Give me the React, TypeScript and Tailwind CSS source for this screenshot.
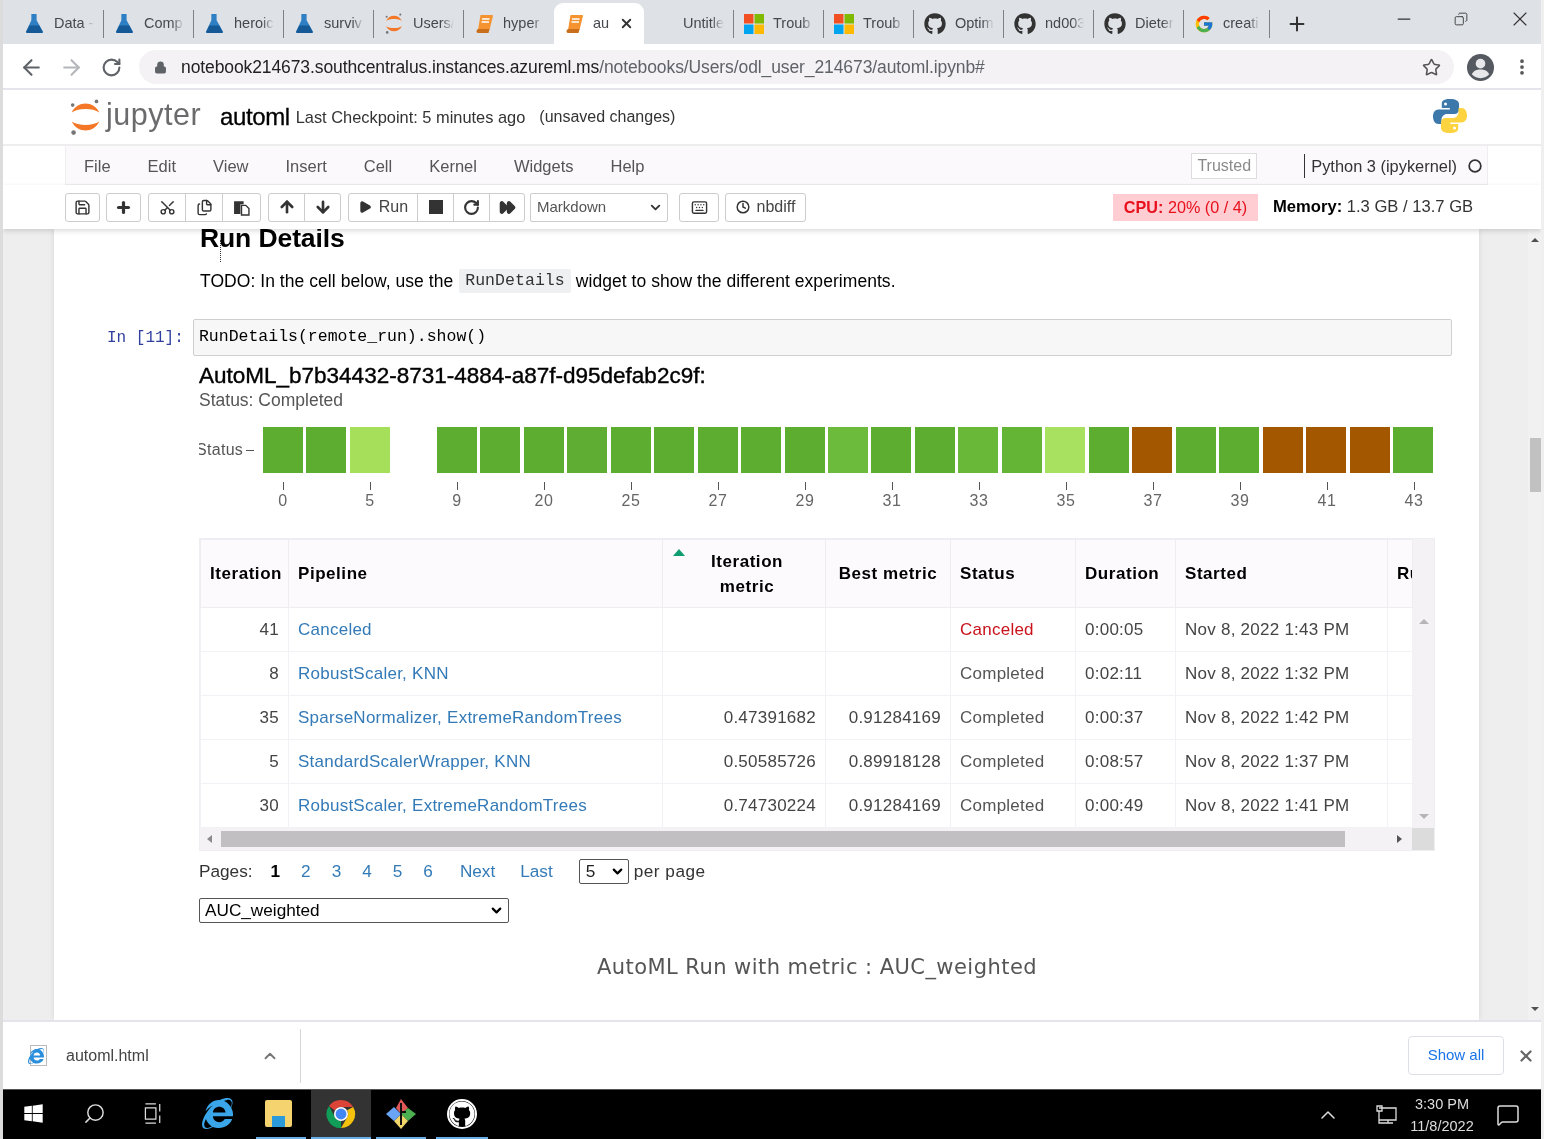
import {
  ArrowDown,
  ArrowLeft,
  ArrowRight,
  ChevronDown,
  ChevronUp,
  Circle,
  Clock,
  Copy,
  FastForward,
  Files,
  Keyboard,
  MessageSquare,
  MoreVertical,
  Play,
  Plus,
  RotateCw,
  Save,
  Scissors,
  Search,
  Star,
  X,
  ArrowUp,
  Lock,
  Minus,
} from "lucide-react";
import { FaGithub, FaInternetExplorer, FaWindows } from "react-icons/fa";
import { FcGoogle } from "react-icons/fc";

const sans = "font-['Liberation_Sans',Arial,sans-serif]";
const mono = "font-['Liberation_Mono',monospace]";

function Flask() {
  return (
    <svg viewBox="0 0 20 20" className="h-[21px] w-[21px] shrink-0">
      <path d="M7 1h5v6l6 10.500c.4.9-.2 1.500-1 1.500H3c-.9 0-1.400-.7-1-1.500L7 7z" fill="#2f7fc4" />
      <path d="M5 12h9.500l3.300 6-.8 1H3l-1-1z" fill="#155a96" />
    </svg>
  );
}

function JupyterArcs({ className }: { className: string }) {
  return (
    <svg viewBox="0 0 36 40" className={className}>
      <path d="M3 15C9 2 27 2 33 15C26 10 10 10 3 15Z" fill="#f37726" />
      <path d="M3 25C9 38 27 38 33 25C26 30 10 30 3 25Z" fill="#f37726" />
      <circle cx="30" cy="3" r="2" fill="#767677" />
      <circle cx="4" cy="7" r="2" fill="#767677" />
      <circle cx="5" cy="37" r="2.500" fill="#767677" />
    </svg>
  );
}

function Windows4() {
  return (
    <svg viewBox="0 0 20 20" className="h-[20px] w-[20px] shrink-0">
      <rect x="0" y="0" width="9.500" height="9.500" fill="#f25022" />
      <rect x="10.500" y="0" width="9.500" height="9.500" fill="#7fba00" />
      <rect x="0" y="10.500" width="9.500" height="9.500" fill="#00a4ef" />
      <rect x="10.500" y="10.500" width="9.500" height="9.500" fill="#ffb900" />
    </svg>
  );
}

function Book() {
  return (
    <svg viewBox="0 0 20 20" className="h-[20px] w-[20px] shrink-0">
      <path d="M6.500 1H18c.7 0 1 .5.900 1.200L15.500 16H4z" fill="#f59331" />
      <path d="M4 15c-2 1-2 4 0 4h10.500l1-4z" fill="#c96f1b" />
      <path d="M8 5h7.500M7.500 8h7.500" stroke="#fff" strokeWidth="1.300" />
    </svg>
  );
}

function PythonLogo() {
  return (
    <svg viewBox="0 0 36 36" className="h-[36px] w-[36px]">
      <path d="M17.800 1c-7 0-8 2.400-8 5v4h8v1.500H6.500C3 11.500 1 14.500 1 18.500s2 7.500 5.500 7.500h3v-4.500c0-3 2.500-5.500 5.500-5.500h7.500c2.500 0 4.500-2 4.500-4.500V6c0-3-3-5-9.200-5z" fill="#3c78aa" />
      <path d="M18.200 35c7 0 8-2.400 8-5v-4h-8v-1.500h11.300c3.500 0 5.500-3 5.500-7s-2-7.500-5.500-7.500h-3v4.500c0 3-2.500 5.500-5.500 5.500H13.500C11 20 9 22 9 24.500V30c0 3 3 5 9.200 5z" fill="#fdd340" />
      <circle cx="13.500" cy="6" r="1.500" fill="#fff" />
      <circle cx="22.500" cy="30" r="1.500" fill="#fff" />
    </svg>
  );
}

function ChromeLogo() {
  return (
    <svg viewBox="0 0 32 32" className="h-[30px] w-[30px]">
      <path d="M16 1a15 15 0 0 1 13 7.500H16a7.500 7.500 0 0 0-6.500 3.750L3.200 7.500A15 15 0 0 1 16 1z" fill="#db4437" />
      <path d="M29 8.500A15 15 0 0 1 16 31l6.500-11.250A7.500 7.500 0 0 0 22.500 12z" fill="#f4c20d" />
      <path d="M16 31A15 15 0 0 1 3.200 7.500l6.300 12A7.500 7.500 0 0 0 16 23.500z" fill="#0f9d58" />
      <circle cx="16" cy="16" r="7.500" fill="#fff" />
      <circle cx="16" cy="16" r="5.800" fill="#4285f4" />
    </svg>
  );
}

function GitLogo() {
  return (
    <svg viewBox="0 0 32 32" className="h-[32px] w-[32px]">
      <path d="M16 1l7 9-7 6-5-6z" fill="#e25757" />
      <path d="M16 16l7-6 8 6-8 7z" fill="#4caf50" />
      <path d="M16 16l-7 7 7 8 7-8z" fill="#f3d66a" />
      <path d="M1 16l8-7 7 7-7 7z" fill="#6aa5f5" />
      <path d="M16 5v22M16 14h5" stroke="#111" strokeWidth="2" />
    </svg>
  );
}

type Tab = { label: string; icon: React.ReactNode; active?: boolean };

const ghIcon = <FaGithub className="h-[22px] w-[22px] shrink-0 text-[#333]" />;

const tabs: Tab[] = [
  { label: "Data -", icon: <Flask /> },
  { label: "Comp", icon: <Flask /> },
  { label: "heroic", icon: <Flask /> },
  { label: "surviv", icon: <Flask /> },
  { label: "Users/", icon: <JupyterArcs className="h-[21px] w-[20px] shrink-0" /> },
  { label: "hyper", icon: <Book /> },
  { label: "au", icon: <Book />, active: true },
  { label: "Untitle", icon: <span className="h-[20px] w-[20px] shrink-0" /> },
  { label: "Troub", icon: <Windows4 /> },
  { label: "Troub", icon: <Windows4 /> },
  { label: "Optim", icon: ghIcon },
  { label: "nd003", icon: ghIcon },
  { label: "Dieter", icon: ghIcon },
  { label: "creati", icon: <FcGoogle className="h-[20px] w-[20px] shrink-0" /> },
];

function TabBar() {
  return (
    <div className={`flex h-[44px] shrink-0 items-end bg-[#dee1e6] pl-[11px] ${sans}`}>
      {tabs.map((t, i) => (
        <div
          key={i}
          className={`flex h-[41px] items-center gap-[9px] pl-[10px] ${i === tabs.length - 1 ? "w-[86px]" : "w-[90px]"} ${t.active ? "rounded-t-[9px] bg-white" : ""}`}
        >
          {t.icon}
          <span
            className={`overflow-hidden text-[14.500px] whitespace-nowrap text-[#45494f] [mask-image:linear-gradient(to_right,black_70%,transparent)] ${t.active ? "w-[23px]" : "w-[41px]"}`}
          >
            {t.label}
          </span>
          {t.active ? (
            <X className="-ml-[6px] h-[15px] w-[15px] shrink-0 text-[#333]" strokeWidth={3} />
          ) : (
            !tabs[i + 1]?.active && <span className="ml-auto h-[28px] w-px shrink-0 bg-[#7d8085]" />
          )}
        </div>
      ))}
      <Plus className="mb-[9px] ml-[16px] h-[22px] w-[22px] text-[#333]" strokeWidth={2.200} />
      <div className="mb-[13px] ml-auto flex items-center gap-[40px] pr-[9px] text-[#333]">
        <Minus className="h-[20px] w-[20px]" strokeWidth={1.500} />
        <Copy className="h-[14px] w-[14px] -scale-x-100" strokeWidth={1.500} />
        <X className="h-[24px] w-[24px]" strokeWidth={1.100} />
      </div>
    </div>
  );
}

function Avatar() {
  return (
    <svg viewBox="0 0 30 30" className="ml-[12px] h-[29px] w-[29px] shrink-0">
      <circle cx="15" cy="15" r="14" fill="#555a60" />
      <circle cx="15" cy="11" r="5" fill="#e8e8ea" />
      <path d="M6 22c2-4 5-5 9-5s7 1 9 5c-2 2.500-5 4-9 4s-7-1.500-9-4z" fill="#e8e8ea" />
    </svg>
  );
}

function AddressBar() {
  return (
    <div className={`flex h-[46px] shrink-0 items-center border-b-2 border-[#e4e4ea] bg-white pl-[16px] pt-[2px] ${sans}`}>
      <ArrowLeft className="h-[25px] w-[25px] text-[#5f6368]" strokeWidth={2} />
      <ArrowRight className="ml-[15px] h-[25px] w-[25px] text-[#b4b6ba]" strokeWidth={2} />
      <RotateCw className="ml-[17px] h-[21px] w-[21px] text-[#5f6368]" strokeWidth={2.400} />
      <div className="ml-[17px] flex h-[34px] w-[1315px] items-center rounded-full bg-[#f5f2f6] pl-[15px] pr-[13px]">
        <Lock className="h-[13px] w-[13px] fill-[#5f6368] text-[#5f6368]" />
        <span className="ml-[14px] text-[17.500px] tracking-[-0.1px] text-[#222]">
          notebook214673.southcentralus.instances.azureml.ms
          <span className="text-[#5f6368]">/notebooks/Users/odl_user_214673/automl.ipynb#</span>
        </span>
        <Star className="ml-auto h-[19px] w-[19px] text-[#555]" strokeWidth={2} />
      </div>
      <Avatar />
      <MoreVertical className="ml-[17px] h-[20px] w-[20px] text-[#555]" strokeWidth={2.500} />
    </div>
  );
}

function JupyterHeader() {
  return (
    <div className={`flex h-[56px] shrink-0 items-center border-b-2 border-[#eeeeee] bg-white pl-[66px] pr-[73px] ${sans}`}>
      <JupyterArcs className="h-[38px] w-[33px]" />
      <span className="ml-[4px] -mt-[5px] text-[30.500px] tracking-[0.5px] text-[#6b6b6d]">jupyter</span>
      <span className="ml-[19px] -mt-[1px] text-[24px] tracking-[-0.4px] text-black [-webkit-text-stroke:0.3px_black]">automl</span>
      <span className="ml-[6px] text-[16.400px] text-[#333]">Last Checkpoint: 5 minutes ago</span>
      <span className="ml-[14px] text-[16px] text-[#333]">(unsaved changes)</span>
      <span className="ml-auto -mt-[2px]">
        <PythonLogo />
      </span>
    </div>
  );
}

const menus = ["File", "Edit", "View", "Insert", "Cell", "Kernel", "Widgets", "Help"];

function MenuBar() {
  return (
    <div className={`h-[39px] shrink-0 bg-white pl-[62px] pr-[53px] ${sans}`}>
      <div className="flex h-full items-center border border-t-0 border-[#eeeeee] bg-[#fbf9fc] pl-[18px] pr-[5px] pt-[2px]">
        <div className="flex gap-[37px] text-[16.500px] text-[#555]">
          {menus.map((m) => (
            <span key={m}>{m}</span>
          ))}
        </div>
        <span className="ml-auto flex h-[26px] w-[66px] items-center justify-center border border-[#dddddd] bg-white text-[16px] text-[#8a8a8a]">
          Trusted
        </span>
        <span className="ml-[47px] flex h-[24px] items-center border-l border-[#333] pl-[6px] text-[16.400px] text-[#333]">
          Python 3 (ipykernel)
        </span>
        <Circle className="ml-[11px] h-[14px] w-[14px] text-[#333]" strokeWidth={3} />
      </div>
    </div>
  );
}

function ToolBtn({ children, w, first, last }: { children: React.ReactNode; w: number; first?: boolean; last?: boolean }) {
  return (
    <div
      className={`flex h-[29px] items-center justify-center gap-[7px] border border-[#cccccc] bg-white text-[#333] ${first ? "rounded-l-[3px]" : "-ml-px"} ${last ? "rounded-r-[3px]" : ""}`}
      style={{ width: w }}
    >
      {children}
    </div>
  );
}

function PasteIcon() {
  return (
    <svg viewBox="0 0 16 16" className="h-[17px] w-[17px]">
      <path d="M1 2h9v3H7v9H1z" fill="#333" />
      <path d="M8 6h4l3 3v6H8z" fill="#fff" stroke="#333" strokeWidth="1.300" />
    </svg>
  );
}

function Toolbar() {
  const ic = "h-[17px] w-[17px]";
  return (
    <div className={`relative z-10 flex h-[44px] shrink-0 items-center bg-white pl-[62px] text-[16px] shadow-[0_2px_5px_rgba(0,0,0,0.15)] ${sans}`}>
      <ToolBtn w={35} first last><Save className={ic} strokeWidth={2} /></ToolBtn>
      <div className="ml-[6px]"><ToolBtn w={35} first last><Plus className={ic} strokeWidth={4.500} /></ToolBtn></div>
      <div className="ml-[7px] flex">
        <ToolBtn w={38} first><Scissors className={`${ic} -rotate-90`} strokeWidth={2} /></ToolBtn>
        <ToolBtn w={38}><Files className={ic} strokeWidth={2} /></ToolBtn>
        <ToolBtn w={39} last><PasteIcon /></ToolBtn>
      </div>
      <div className="ml-[7px] flex">
        <ToolBtn w={37} first><ArrowUp className="h-[18px] w-[18px]" strokeWidth={3.500} /></ToolBtn>
        <ToolBtn w={37} last><ArrowDown className="h-[18px] w-[18px]" strokeWidth={3.500} /></ToolBtn>
      </div>
      <div className="ml-[7px] flex">
        <ToolBtn w={70} first><Play className="h-[14px] w-[14px] fill-[#333]" /><span className="text-[#444]">Run</span></ToolBtn>
        <ToolBtn w={37}><span className="h-[14px] w-[14px] bg-[#333]" /></ToolBtn>
        <ToolBtn w={37}><RotateCw className={ic} strokeWidth={3} /></ToolBtn>
        <ToolBtn w={36} last><FastForward className={`${ic} fill-[#333]`} /></ToolBtn>
      </div>
      <div className="ml-[5px] flex h-[29px] w-[138px] items-center justify-between rounded-[2px] border border-[#cccccc] bg-white pl-[6px] pr-[4px] text-[15px] text-[#555]">
        Markdown
        <ChevronDown className="h-[15px] w-[15px] text-[#333]" strokeWidth={3} />
      </div>
      <div className="ml-[11px]"><ToolBtn w={40} first last><Keyboard className="h-[17px] w-[17px]" strokeWidth={2} /></ToolBtn></div>
      <div className="ml-[6px]"><ToolBtn w={81} first last><Clock className="h-[14px] w-[14px]" strokeWidth={2.500} /><span className="text-[#444]">nbdiff</span></ToolBtn></div>
      <div className="ml-[307px] flex h-[27px] w-[145px] items-center justify-center bg-[#ffcdd2] text-[16.200px] text-[#e8101c]">
        <b>CPU:</b>&nbsp;20% (0 / 4)
      </div>
      <div className="ml-[15px] text-[16.600px] text-[#333]">
        <b className="text-black">Memory:</b> 1.3 GB / 13.7 GB
      </div>
    </div>
  );
}

const G = "#5cad30";
const bars = [
  G, G, "#a6e05a", "", G, G, G, "#5fae33", G, G, G, G, G, "#6cbb3c", G, G,
  "#6ab838", "#64b436", "#a8e060", G, "#a35800", G, G, "#a35800", "#a35800", "#a35800", G,
];
const ticks = ["0", "5", "9", "20", "25", "27", "29", "31", "33", "35", "37", "39", "41", "43"];

function Chart() {
  return (
    <div className="mt-[15px]">
      <div className="flex items-center">
        <div className="flex w-[64px] items-center overflow-hidden text-[16px] whitespace-nowrap text-[#555]">
          <span className="-ml-[3px] tracking-[0.3px]">Status</span>
          <span className="ml-[3px] h-px w-[8px] bg-[#555]" />
        </div>
        <div className="grid h-[46px] w-[1170px] grid-cols-[repeat(27,minmax(0,1fr))] gap-x-[3.500px]">
          {bars.map((c, i) => (
            <div key={i} style={{ backgroundColor: c || "transparent" }} />
          ))}
        </div>
      </div>
      <div className="ml-[40.500px] mt-[9px] grid w-[1218px] grid-cols-[repeat(14,minmax(0,1fr))]">
        {ticks.map((t) => (
          <div key={t} className="flex flex-col items-center text-[16px] tracking-[0.5px] text-[#666]">
            <span className="h-[8px] w-px bg-[#555]" />
            <span className="mt-[1px] leading-[20px]">{t}</span>
          </div>
        ))}
      </div>
    </div>
  );
}

type Row = { it: string; name: string; metric: string; best: string; status: string; dur: string; start: string };

const rows: Row[] = [
  { it: "41", name: "Canceled", metric: "", best: "", status: "Canceled", dur: "0:00:05", start: "Nov 8, 2022 1:43 PM" },
  { it: "8", name: "RobustScaler, KNN", metric: "", best: "", status: "Completed", dur: "0:02:11", start: "Nov 8, 2022 1:32 PM" },
  { it: "35", name: "SparseNormalizer, ExtremeRandomTrees", metric: "0.47391682", best: "0.91284169", status: "Completed", dur: "0:00:37", start: "Nov 8, 2022 1:42 PM" },
  { it: "5", name: "StandardScalerWrapper, KNN", metric: "0.50585726", best: "0.89918128", status: "Completed", dur: "0:08:57", start: "Nov 8, 2022 1:37 PM" },
  { it: "30", name: "RobustScaler, ExtremeRandomTrees", metric: "0.74730224", best: "0.91284169", status: "Completed", dur: "0:00:49", start: "Nov 8, 2022 1:41 PM" },
];

const cols = [88, 374, 163, 125, 125, 100, 212, 25];

function RunsTable() {
  const th = "border border-[#f0edf2] px-[9px] align-middle text-[17px] font-bold tracking-[0.55px] text-black";
  const td = "border border-[#f3f1f5] px-[9px] text-[17px] tracking-[0.25px] whitespace-nowrap";
  const grey = "text-[#444]";
  return (
    <div className="mt-[27px] w-[1236px] border border-[#f0edf2] bg-white">
      <div className="flex">
        <table className="w-[1212px] table-fixed border-collapse">
          <colgroup>
            {cols.map((w, i) => (
              <col key={i} style={{ width: w }} />
            ))}
          </colgroup>
          <thead className="bg-[#fdfafe]">
            <tr className="h-[68px]">
              <th className={`${th} text-left`}>Iteration</th>
              <th className={`${th} text-left`}>Pipeline</th>
              <th className={`${th} relative pl-[46px] pr-[40px] text-center leading-[25px]`}>
                <span className="absolute left-[10px] top-[9px] h-0 w-0 border-x-[6px] border-b-[7px] border-x-transparent border-b-[#0f9d72]" />
                Iteration metric
              </th>
              <th className={`${th} text-center whitespace-nowrap`}>Best metric</th>
              <th className={`${th} text-left`}>Status</th>
              <th className={`${th} text-left`}>Duration</th>
              <th className={`${th} text-left`}>Started</th>
              <th className={`${th} overflow-hidden text-left whitespace-nowrap`}>Run</th>
            </tr>
          </thead>
          <tbody>
            {rows.map((r) => (
              <tr key={r.it} className="h-[44px]">
                <td className={`${td} ${grey} text-right`}>{r.it}</td>
                <td className={`${td} text-[#337ab7]`}>{r.name}</td>
                <td className={`${td} ${grey} text-right`}>{r.metric}</td>
                <td className={`${td} ${grey} text-right`}>{r.best}</td>
                <td className={`${td} ${r.status === "Canceled" ? "text-[#c9121b]" : "text-[#555]"}`}>{r.status}</td>
                <td className={`${td} ${grey}`}>{r.dur}</td>
                <td className={`${td} ${grey}`}>{r.start}</td>
                <td className={td} />
              </tr>
            ))}
          </tbody>
        </table>
        <div className="flex w-[22px] flex-col items-center justify-end bg-[#f5f2f6]">
          <div className="mb-[190px] h-0 w-0 border-x-[5px] border-b-[5px] border-x-transparent border-b-[#b5b5b8]" />
          <div className="mb-[9px] h-0 w-0 border-x-[5px] border-t-[5px] border-x-transparent border-t-[#b5b5b8]" />
        </div>
      </div>
      <div className="flex h-[22px] items-center bg-[#f5f2f6]">
        <div className="ml-[7px] h-0 w-0 border-y-[4.500px] border-r-[5px] border-y-transparent border-r-[#8b8b8b]" />
        <div className="ml-[9px] h-[16px] w-[1124px] bg-[#c1bfc2]" />
        <div className="ml-[52px] h-0 w-0 border-y-[4.500px] border-l-[5px] border-y-transparent border-l-[#555]" />
        <div className="ml-auto h-full w-[22px] bg-[#dcdcdc]" />
      </div>
    </div>
  );
}

function Pager() {
  return (
    <div className="mt-[8px] flex h-[25px] items-center text-[17.200px] text-[#333]">
      Pages:
      <b className="ml-[18px] text-black">1</b>
      <div className="ml-[21px] flex gap-[21px] text-[#337ab7]">
        <span>2</span>
        <span>3</span>
        <span>4</span>
        <span>5</span>
        <span>6</span>
      </div>
      <span className="ml-[27px] text-[#337ab7]">Next</span>
      <span className="ml-[25px] text-[#337ab7]">Last</span>
      <div className="ml-[26px] flex h-[25px] w-[50px] items-center justify-between rounded-[2px] border border-[#555] pl-[6px] pr-[3px] text-[#222]">
        5
        <ChevronDown className="h-[15px] w-[15px] text-black" strokeWidth={3.500} />
      </div>
      <span className="ml-[5px] tracking-[0.5px]">per page</span>
    </div>
  );
}

function Notebook() {
  return (
    <div className={`flex min-h-0 flex-1 bg-[#eeeeee] ${sans}`}>
      <div className="ml-[51px] w-[1425px] min-w-0 overflow-hidden bg-white pl-[146px] shadow-[0_0_6px_rgba(0,0,0,0.1)]">
        <h2 className="relative -mt-[8px] text-[26.500px] leading-[34px] font-bold tracking-[-0.1px] text-black">
          Run Details
          <span className="absolute left-[20px] top-[19px] h-[22px] border-l border-dotted border-[#333]" />
        </h2>
        <p className="mt-[13px] flex h-[26px] items-center text-[17.500px] tracking-[0.05px] text-black">
          TODO: In the cell below, use the
          <code className={`ml-[6px] rounded-[2px] bg-[#eff0f1] px-[6px] text-[16.500px] leading-[24px] text-[#333] ${mono}`}>RunDetails</code>
          <span className="ml-[5px]">widget to show the different experiments.</span>
        </p>
        <div className="-ml-[93px] mt-[25px] flex w-[1345px] items-center">
          <span className={`w-[86px] text-[16px] text-[#303f9f] ${mono}`}>In [11]:</span>
          <div className={`flex h-[37px] w-[1260px] items-center rounded-[2px] border border-[#cfcfcf] bg-[#f7f7f7] pl-[5px] text-[16.500px] text-black ${mono}`}>
            RunDetails(remote_run).show()
          </div>
        </div>
        <div className="-ml-[1px]">
          <h3 className="mt-[7px] text-[22.500px] leading-[26px] text-black [-webkit-text-stroke:0.4px_black]">
            AutoML_b7b34432-8731-4884-a87f-d95defab2c9f:
          </h3>
          <p className="-mt-[1px] text-[17.500px] leading-[24px] text-[#555]">Status: Completed</p>
          <Chart />
          <RunsTable />
          <Pager />
          <div className="mt-[14px] flex h-[25px] w-[310px] items-center justify-between rounded-[2px] border border-[#555] pl-[5px] pr-[4px] text-[17.200px] text-black">
            AUC_weighted
            <ChevronDown className="h-[15px] w-[15px]" strokeWidth={3.500} />
          </div>
          <p className="mt-[29px] w-[1236px] text-center font-['DejaVu_Sans',sans-serif] text-[21px] tracking-[0.45px] text-[#555]">
            AutoML Run with metric : AUC_weighted
          </p>
        </div>
      </div>
      <div className="ml-auto flex w-[13px] flex-col items-center bg-[#f1f1f1] pt-[9px]">
        <div className="h-0 w-0 border-x-[4px] border-b-[4px] border-x-transparent border-b-[#505050]" />
        <div className="mt-[196px] h-[54px] w-[11px] self-end bg-[#c1c1c1]" />
        <div className="mt-auto mb-[9px] h-0 w-0 border-x-[4px] border-t-[4px] border-x-transparent border-t-[#505050]" />
      </div>
    </div>
  );
}

function DownloadBar() {
  return (
    <div className={`flex h-[69px] shrink-0 items-center border-t-2 border-[#e4e4ea] bg-white pl-[27px] pr-[6px] ${sans}`}>
      <div className="relative h-[21px] w-[17px] border border-[#bbb] bg-white">
        <FaInternetExplorer className="absolute -left-[3px] top-[2px] h-[16px] w-[16px] text-[#2a8fdc]" />
      </div>
      <span className="ml-[19px] text-[16px] text-[#444]">automl.html</span>
      <ChevronUp className="ml-[112px] h-[18px] w-[18px] text-[#777]" strokeWidth={2.500} />
      <span className="ml-[21px] h-[54px] w-px bg-[#d5d5d8]" />
      <div className="ml-auto flex h-[39px] w-[96px] items-center justify-center rounded-[4px] border border-[#dddfe6] text-[15px] text-[#1a73e8]">
        Show all
      </div>
      <X className="ml-[13px] h-[18px] w-[18px] text-[#666]" strokeWidth={3} />
    </div>
  );
}

function TaskSlot({ w, under, children }: { w: number; under?: boolean; children: React.ReactNode }) {
  return (
    <div className="h-full" style={{ width: w }}>
      <div className={`flex h-full items-center justify-center border-b-2 ${under ? "mx-[5px] border-[#6ab0e8]" : "border-transparent"}`}>
        {children}
      </div>
    </div>
  );
}

function TaskbarEnd() {
  return (
    <>
      <ChevronUp className="ml-auto h-[24px] w-[24px]" strokeWidth={1.500} />
      <svg viewBox="0 0 22 20" className="ml-[35px] h-[20px] w-[22px]" fill="none" stroke="#ddd" strokeWidth="1.300">
        <path d="M4 3h17v12H4M2 1h5v5H2zM4 6v12h7M13 15v3M9 18h9" />
      </svg>
      <div className="ml-[9px] flex w-[72px] flex-col items-center text-[14.500px] leading-[22px] text-[#ddd]">
        <span>3:30 PM</span>
        <span>11/8/2022</span>
      </div>
      <MessageSquare className="ml-[18px] mr-[21px] h-[24px] w-[24px]" strokeWidth={1.500} />
    </>
  );
}

function Taskbar() {
  return (
    <div className={`flex h-[50px] shrink-0 items-center border-t border-[#555] bg-black text-[#ddd] ${sans}`}>
      <TaskSlot w={61}><FaWindows className="h-[21px] w-[21px] text-white" /></TaskSlot>
      <TaskSlot w={60}><Search className="h-[23px] w-[23px] -scale-x-100" strokeWidth={1.500} /></TaskSlot>
      <TaskSlot w={59}>
        <svg viewBox="0 0 20 22" className="h-[21px] w-[20px]" fill="none" stroke="#ddd" strokeWidth="1.300">
          <path d="M1 1h11M1 21h11M1 5h11v12H1zM16 1v8M16 13v8" />
        </svg>
      </TaskSlot>
      <TaskSlot w={68}><FaInternetExplorer className="h-[31px] w-[31px] text-[#3aa5e8]" /></TaskSlot>
      <TaskSlot w={60} under>
        <div className="relative mr-[6px] h-[27px] w-[27px] rounded-[2px] bg-[#f5d470]">
          <span className="absolute bottom-0 left-[7px] h-[11px] w-[13px] bg-[#2a9bd8]" />
        </div>
      </TaskSlot>
      <div className="flex h-full w-[60px] items-center justify-center border-b-2 border-[#6ab0e8] bg-[#333]">
        <ChromeLogo />
      </div>
      <TaskSlot w={60} under><GitLogo /></TaskSlot>
      <TaskSlot w={62} under>
        <span className="flex h-[30px] w-[30px] items-center justify-center rounded-full border-2 border-white">
          <FaGithub className="h-[26px] w-[26px] text-white" />
        </span>
      </TaskSlot>
      <TaskbarEnd />
    </div>
  );
}

export default function App() {
  return (
    <div className="flex h-[1139px] w-[1544px] flex-col overflow-hidden border-x-[3px] border-l-[#dcdcdc] border-r-[#efefef] bg-white blur-[0.35px]">
      <TabBar />
      <AddressBar />
      <JupyterHeader />
      <MenuBar />
      <Toolbar />
      <Notebook />
      <DownloadBar />
      <Taskbar />
    </div>
  );
}
